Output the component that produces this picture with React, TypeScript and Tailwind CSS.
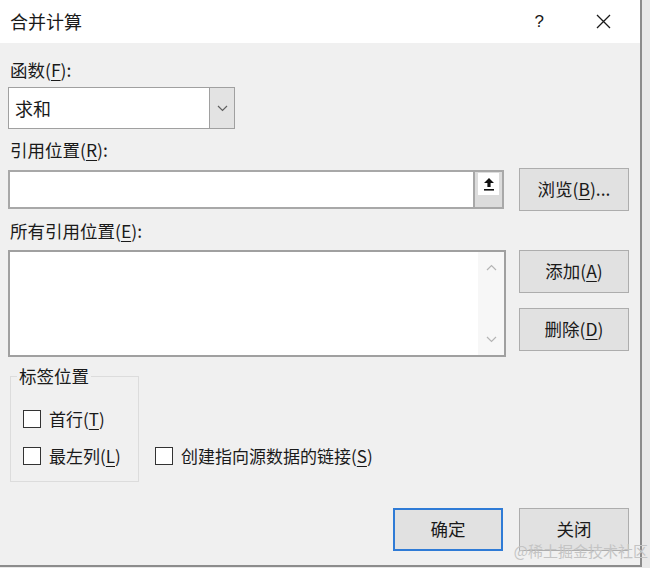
import React from "react"

// ── Consolidate dialog (合并计算) ───────────────────────────────────────────
// Windows-style modal: title bar, function select, reference input,
// reference list with add/delete, label options and OK/Close.

const font = { fontFamily: '"Noto Sans CJK SC", "Noto Sans", sans-serif' }

function Key({ k }: { k: string }) {
  return <span className="underline underline-offset-[3px]">{k}</span>
}

function WinButton({ children, primary = false }: { children: React.ReactNode; primary?: boolean }) {
  return (
    <div
      className={
        "w-[110px] h-[43px] flex items-center justify-center bg-[#e1e1e1] text-[17.5px] text-[#1a1a1a] " +
        (primary ? "border-2 border-[#2f7bd6]" : "border border-[#adadad]")
      }
    >
      {children}
    </div>
  )
}

function CheckBox({ label }: { label: React.ReactNode }) {
  return (
    <div className="h-[19px] flex items-center gap-2 text-[17px] text-[#1a1a1a]">
      <div className="w-[18px] h-[18px] bg-white border border-[#333] shrink-0" />
      <span className="whitespace-nowrap">{label}</span>
    </div>
  )
}

export default function App() {
  return (
    <div className="w-[650px] h-[568px] bg-[#e9e9e9] overflow-hidden" style={font}>
      <div className="relative w-[642px] h-[567px] bg-[#f0f0f0] border-r-2 border-b-2 border-[#8c8c8c] flex flex-col">
        {/* Title bar */}
        <div className="h-[43px] bg-white flex items-center pl-[10px] shrink-0">
          <span className="text-[18px] text-[#1a1a1a]">合并计算</span>
          <div className="flex-1" />
          <span className="text-[17px] text-[#1a1a1a] mr-[52px]" style={{ fontFamily: '"Liberation Sans", sans-serif' }}>?</span>
          <svg width="15" height="15" viewBox="0 0 15 15" className="mr-[29px]">
            <path d="M1 1 L14 14 M14 1 L1 14" stroke="#1a1a1a" strokeWidth="1.3" />
          </svg>
        </div>

        <div className="flex flex-col pl-[8px] pr-[11px]">
          {/* Function */}
          <div className="mt-[17px] h-[20px] leading-[20px] pl-[2px] text-[17.5px] text-[#1a1a1a]">
            函数(<Key k="F" />):
          </div>
          <div className="mt-[7px] w-[227px] h-[42px] flex border border-[#a0a0a0] bg-white">
            <div className="flex-1 flex items-center pl-[6px] text-[18px] text-[#1a1a1a]">求和</div>
            <div className="w-[25px] bg-[#e3e3e3] border-l border-[#a0a0a0] flex items-center justify-center">
              <svg width="11" height="7" viewBox="0 0 11 7">
                <path d="M1 1 L5.5 5.5 L10 1" stroke="#606060" strokeWidth="1.2" fill="none" />
              </svg>
            </div>
          </div>

          {/* Reference */}
          <div className="mt-[11px] h-[20px] leading-[20px] pl-[2px] text-[17.5px] text-[#1a1a1a]">
            引用位置(<Key k="R" />):
          </div>
          <div className="mt-[8px] h-[42px] flex items-center">
            <div className="w-[496px] h-[39px] flex border-2 border-[#a8a8a8] bg-white">
              <div className="flex-1" />
              <div className="w-[29px] bg-[#dcdcdc] border-l-2 border-[#a8a8a8] flex justify-center pt-[1px]">
                <div className="w-[21px] h-[22px] bg-white flex items-center justify-center">
                  <svg width="12" height="14" viewBox="0 0 12 14">
                    <path d="M6 1 L11 6 L7.6 6 L7.6 10 L4.4 10 L4.4 6 L1 6 Z" fill="#111" />
                    <rect x="1" y="12" width="10" height="1.6" fill="#111" />
                  </svg>
                </div>
              </div>
            </div>
            <div className="flex-1" />
            <WinButton>
              浏览(<Key k="B" />)...
            </WinButton>
          </div>

          {/* All references */}
          <div className="mt-[11px] h-[20px] leading-[20px] pl-[2px] text-[17.5px] text-[#1a1a1a]">
            所有引用位置(<Key k="E" />):
          </div>
          <div className="mt-[9px] flex items-start">
            <div className="w-[498px] h-[107px] flex border-2 border-[#a0a0a0] bg-white">
              <div className="flex-1" />
              <div className="w-[26px] bg-[#f7f7f7] flex flex-col items-center justify-between py-[12px]">
                <svg width="11" height="7" viewBox="0 0 11 7">
                  <path d="M1 6 L5.5 1.5 L10 6" stroke="#b5b5b5" strokeWidth="1.2" fill="none" />
                </svg>
                <svg width="11" height="7" viewBox="0 0 11 7">
                  <path d="M1 1 L5.5 5.5 L10 1" stroke="#b5b5b5" strokeWidth="1.2" fill="none" />
                </svg>
              </div>
            </div>
            <div className="flex-1" />
            <div className="flex flex-col gap-[15px]">
              <WinButton>
                添加(<Key k="A" />)
              </WinButton>
              <WinButton>
                删除(<Key k="D" />)
              </WinButton>
            </div>
          </div>

          {/* Label options */}
          <div className="mt-[19px] flex items-start">
            <div className="relative ml-[2px] w-[129px] h-[106px] border border-[#dcdcdc] flex flex-col gap-[18px] pt-[32px] pl-[12px]">
              <span className="absolute left-[6px] top-[-11px] px-[2px] bg-[#f0f0f0] text-[17.5px] leading-[20px] text-[#1a1a1a]">
                标签位置
              </span>
              <CheckBox label={<>首行(<Key k="T" />)</>} />
              <CheckBox label={<>最左列(<Key k="L" />)</>} />
            </div>
            <div className="ml-[16px] mt-[70px]">
              <CheckBox label={<>创建指向源数据的链接(<Key k="S" />)</>} />
            </div>
          </div>

          {/* Footer */}
          <div className="mt-[26px] flex justify-end gap-[16px]">
            <WinButton primary>确定</WinButton>
            <WinButton>关闭</WinButton>
          </div>
        </div>

        <span
          className="absolute right-[-8px] bottom-[3px] text-[15px] text-[#c4c4c4]"
          style={{ fontFamily: '"Noto Sans CJK SC", serif' }}
        >
          @稀土掘金技术社区
        </span>
      </div>
    </div>
  )
}
